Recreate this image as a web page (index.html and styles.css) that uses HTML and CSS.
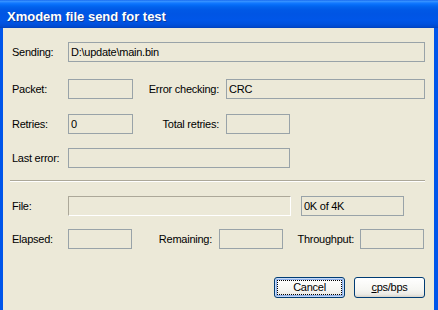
FILE: index.html
```html
<!DOCTYPE html>
<html>
<head>
<meta charset="utf-8">
<link rel="stylesheet" href="styles.css">
</head>
<body>
<div class="window">
  <div class="titlebar"><span class="title">Xmodem file send for test</span></div>
  <div class="client">
    <div class="grid">
      <div class="lbl">Sending:</div>
      <div class="box span-all">D:\update\main.bin</div>

      <div class="lbl">Packet:</div>
      <div class="box"></div>
      <div class="lbl rlbl">Error checking:</div>
      <div class="box span-right">CRC</div>

      <div class="lbl">Retries:</div>
      <div class="box">0</div>
      <div class="lbl rlbl">Total retries:</div>
      <div class="box"></div>
      <div class="filler"></div>

      <div class="lbl">Last error:</div>
      <div class="box span-mid"></div>
    </div>

    <div class="separator"></div>

    <div class="row file-row">
      <div class="lbl w-first">File:</div>
      <div class="progress"></div>
      <div class="box size-box">0K of 4K</div>
    </div>

    <div class="row time-row">
      <div class="lbl w-first">Elapsed:</div>
      <div class="box small"></div>
      <div class="lbl rlbl w-remain">Remaining:</div>
      <div class="box small"></div>
      <div class="lbl rlbl w-thru">Throughput:</div>
      <div class="box small"></div>
    </div>

    <div class="buttons">
      <button class="btn default"><span class="focus">Cancel</span></button>
      <button class="btn"><span class="focus none"><u>c</u>ps/bps</span></button>
    </div>
  </div>
</div>
</body>
</html>
```

FILE: styles.css
```css
html, body {
  margin: 0;
  padding: 0;
  background: #ece9d8;
}

.window {
  width: 438px;
  height: 310px;
  overflow: hidden;
  display: flex;
  flex-direction: column;
  font-family: "Liberation Sans", Arial, sans-serif;
  font-size: 11px;
  letter-spacing: -0.25px;
  color: #000;
}

.titlebar {
  height: 28px;
  box-sizing: border-box;
  padding: 5px 0 0 7px;
  background: linear-gradient(to bottom,
    #0a5cea 0px, #3d95ff 1px, #2a8bff 2px, #1479ff 3px,
    #056cf7 5px, #0262ec 7px, #0058e6 10px, #0055e4 14px,
    #0056e8 20px, #0051de 24px, #0048cc 27px, #003fb8 28px);
  flex: none;
}

.title {
  font-family: "Liberation Sans", Arial, sans-serif;
  font-weight: bold;
  font-size: 13px;
  letter-spacing: 0;
  line-height: 23px;
  color: #fff;
  text-shadow: 1px 1px 0 #0a3a9a;
  display: block;
}

.client {
  flex: 1;
  background: #ece9d8;
  border-left: 3px solid #0055ea;
  border-right: 4px solid #0055ea;
  padding: 14px 9px 0 9px;
  display: flex;
  flex-direction: column;
}

.grid {
  display: grid;
  grid-template-columns: 56px 65px 93px 64px 135px;
  grid-template-rows: 37px 35px 34px 20px;
  align-items: start;
}

.lbl {
  height: 20px;
  line-height: 20px;
  white-space: nowrap;
}

.rlbl {
  text-align: right;
  padding-right: 7px;
}

.box {
  height: 20px;
  box-sizing: border-box;
  border: 1px solid #99a3a8;
  background: #ece9d8;
  line-height: 18px;
  padding-left: 2px;
  white-space: nowrap;
}

.span-all { grid-column: 2 / 6; }
.span-right { grid-column: 4 / 6; }
.span-mid { grid-column: 2 / 5; }

.separator {
  margin: 12px 0 0 -2px;
  width: 415px;
  border-top: 1px solid #aca899;
  border-bottom: 1px solid #ffffff;
}

.row {
  display: flex;
  align-items: flex-start;
}

.file-row {
  margin-top: 14px;
}

.time-row {
  margin-top: 13px;
}

.w-first { width: 56px; flex: none; }

.progress {
  width: 223px;
  height: 20px;
  box-sizing: border-box;
  border-top: 1px solid #aca899;
  border-left: 1px solid #aca899;
  border-right: 1px solid #ffffff;
  border-bottom: 1px solid #ffffff;
  flex: none;
}

.size-box {
  margin-left: 10px;
  width: 103px;
  flex: none;
}

.small {
  width: 64px;
  flex: none;
}

.w-remain {
  width: 87px;
  box-sizing: border-box;
  flex: none;
}

.w-thru {
  width: 77px;
  box-sizing: border-box;
  padding-right: 6px;
  flex: none;
}

.buttons {
  margin-top: 28px;
  display: flex;
  justify-content: flex-end;
  gap: 9px;
}

.btn {
  width: 71px;
  height: 21px;
  box-sizing: border-box;
  border: 1px solid #003c74;
  border-radius: 3px;
  background: linear-gradient(to bottom, #ffffff 0%, #f6f6f2 60%, #ecebe6 85%, #d8d4ca 100%);
  font-family: "Liberation Sans", Arial, sans-serif;
  font-size: 11px;
  letter-spacing: -0.25px;
  color: #000;
  padding: 1px;
  margin: 0;
  display: flex;
}

.btn.default {
  box-shadow: inset 0 0 0 1px #c5d9f6, inset 0 0 0 2px #8fb1ea;
}

.focus {
  flex: 1;
  display: flex;
  align-items: center;
  justify-content: center;
  border: 1px dotted #000;
  margin: 1px;
  line-height: 13px;
}

.focus.none {
  border-color: transparent;
}
```
